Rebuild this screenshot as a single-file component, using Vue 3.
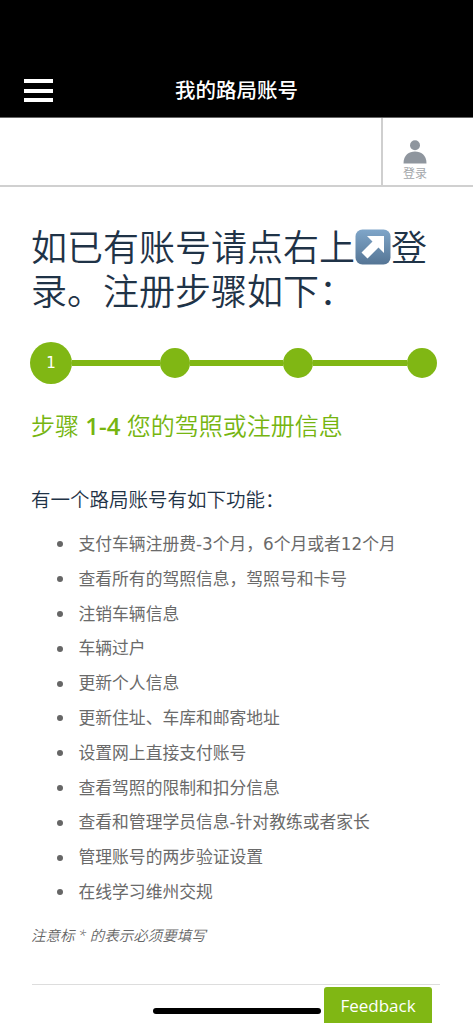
<script setup>
const items = [
  '支付车辆注册费-3个月\uFF0C6个月或者12个月',
  '查看所有的驾照信息\uFF0C驾照号和卡号',
  '注销车辆信息',
  '车辆过户',
  '更新个人信息',
  '更新住址、车库和邮寄地址',
  '设置网上直接支付账号',
  '查看驾照的限制和扣分信息',
  '查看和管理学员信息-针对教练或者家长',
  '管理账号的两步验证设置',
  '在线学习维州交规'
]
</script>

<template>
  <div class="page">
    <header class="top">
      <div class="burger"><span></span><span></span><span></span></div>
      <div class="top-title">我的路局账号</div>
    </header>
    <div class="bar">
      <div class="login">
        <svg class="person" viewBox="0 0 24 24" width="24" height="24">
          <circle cx="12" cy="5.2" r="5" fill="#8f969e" />
          <path d="M0.5 23.5 C0.5 15 6 11.5 12 11.5 C18 11.5 23.5 15 23.5 23.5 Z" fill="#8f969e" />
        </svg>
        <span class="login-text">登录</span>
      </div>
    </div>
    <main class="main">
      <h1 class="title">如已有账号请点右上<span class="emoji"><svg viewBox="0 0 36 36" width="36" height="36">
        <defs><linearGradient id="g" x1="0" y1="0" x2="0" y2="1"><stop offset="0" stop-color="#7fa6c9" /><stop offset="1" stop-color="#557595" /></linearGradient></defs>
        <rect x="0.5" y="0.5" width="35" height="35" rx="7" fill="url(#g)" />
        <path d="M12 7 H29 V24 L23.5 18.5 L12.5 29.5 L6.5 23.5 L17.5 12.5 Z" fill="#fff" />
      </svg></span>登录。注册步骤如下&#xFF1A;</h1>
      <div class="steps">
        <div class="dot first">1</div>
        <div class="line l1"></div>
        <div class="dot"></div>
        <div class="line l2"></div>
        <div class="dot"></div>
        <div class="line l3"></div>
        <div class="dot"></div>
      </div>
      <h2 class="step-title">步骤 <b>1-4</b> 您的驾照或注册信息</h2>
      <p class="intro">有一个路局账号有如下功能&#xFF1A;</p>
      <ul class="list">
        <li v-for="item in items" :key="item">{{ item }}</li>
      </ul>
      <p class="note">注意标 * 的表示必须要填写</p>
      <div class="rule"></div>
    </main>
    <button class="feedback">Feedback</button>
    <div class="home"></div>
  </div>
</template>

<style scoped>
.page {
  position: relative;
  width: 473px;
  height: 1024px;
  overflow: hidden;
  background: #fff;
  font-family: "Open Sans", "Noto Sans CJK SC", sans-serif;
  font-weight: 350;
}
.top {
  height: 117px;
  background: #000;
  border-bottom: 1px solid #666;
  display: flex;
  align-items: flex-end;
  justify-content: center;
  position: relative;
}
.burger {
  position: absolute;
  left: 24px;
  top: 79px;
  width: 29px;
  display: flex;
  flex-direction: column;
  gap: 5.5px;
}
.burger span {
  height: 4px;
  background: #fff;
  display: block;
}
.top-title {
  color: #fff;
  font-size: 20.5px;
  font-weight: 500;
  line-height: 28px;
  margin-bottom: 13px;
}
.bar {
  height: 67px;
  border-bottom: 2px solid #d0d0d0;
  display: flex;
  justify-content: flex-end;
}
.login {
  width: 92px;
  border-left: 2px solid #cfcfcf;
  display: flex;
  flex-direction: column;
  align-items: center;
  padding: 22px 26px 0 0;
  box-sizing: border-box;
}
.person {
  display: block;
}
.login-text {
  font-size: 12px;
  line-height: 14px;
  color: #a3a7ab;
  margin-top: 3px;
  font-weight: 400;
}
.main {
  padding: 0 33px 0 31px;
}
.title {
  margin: 39px 0 0;
  font-size: 36px;
  line-height: 44px;
  font-weight: 350;
  color: #1f3347;
  width: 409px;
}
.emoji {
  display: inline-block;
  width: 36px;
  height: 36px;
  vertical-align: -4px;
}
.emoji svg {
  display: block;
}
.steps {
  display: flex;
  align-items: center;
  margin: 28px 0 0 -1px;
  width: 407px;
}
.dot {
  width: 30px;
  height: 30px;
  border-radius: 50%;
  background: #80b714;
  flex: none;
}
.dot.first {
  width: 42px;
  height: 42px;
  color: #fff;
  font-family: "DejaVu Sans", sans-serif;
  font-weight: 400;
  font-size: 15px;
  display: flex;
  align-items: center;
  justify-content: center;
}
.line {
  height: 6px;
  background: #80b714;
}
.l1 { width: 88px; }
.l2 { width: 93px; }
.l3 { width: 94px; }
.step-title {
  margin: 25px 0 0;
  font-size: 24px;
  line-height: 34px;
  font-weight: 350;
  color: #76b510;
}
.step-title b {
  font-weight: 600;
}
.intro {
  margin: 43px 0 0;
  font-size: 19.5px;
  line-height: 28px;
  color: #1f3347;
}
.list {
  margin: 13px 0 0;
  padding: 0 0 0 26px;
  list-style: none;
  color: #6a6a6a;
  font-family: "DejaVu Sans", "Noto Sans CJK SC", sans-serif;
  font-weight: 400;
  font-size: 16.8px;
  line-height: 34.8px;
}
.list li {
  display: flex;
  align-items: center;
  gap: 15.5px;
  height: 34.8px;
}
.list li::before {
  content: "";
  width: 6px;
  height: 6px;
  border-radius: 50%;
  background: #666;
  flex: none;
}
.note {
  margin: 15px 0 0;
  font-size: 14.5px;
  line-height: 22px;
  font-style: italic;
  color: #666;
}
.rule {
  height: 1px;
  background: #ddd;
  margin: 37px 0 0 1px;
}
.feedback {
  position: absolute;
  left: 324px;
  top: 987px;
  width: 108px;
  height: 36px;
  border: 0;
  border-radius: 3px 3px 0 0;
  background: #80b714;
  color: #fff;
  font-family: "Open Sans", sans-serif;
  font-size: 17px;
  padding: 0;
}
.home {
  position: absolute;
  left: 153px;
  top: 1008px;
  width: 168px;
  height: 6px;
  border-radius: 3px;
  background: #000;
}
</style>
